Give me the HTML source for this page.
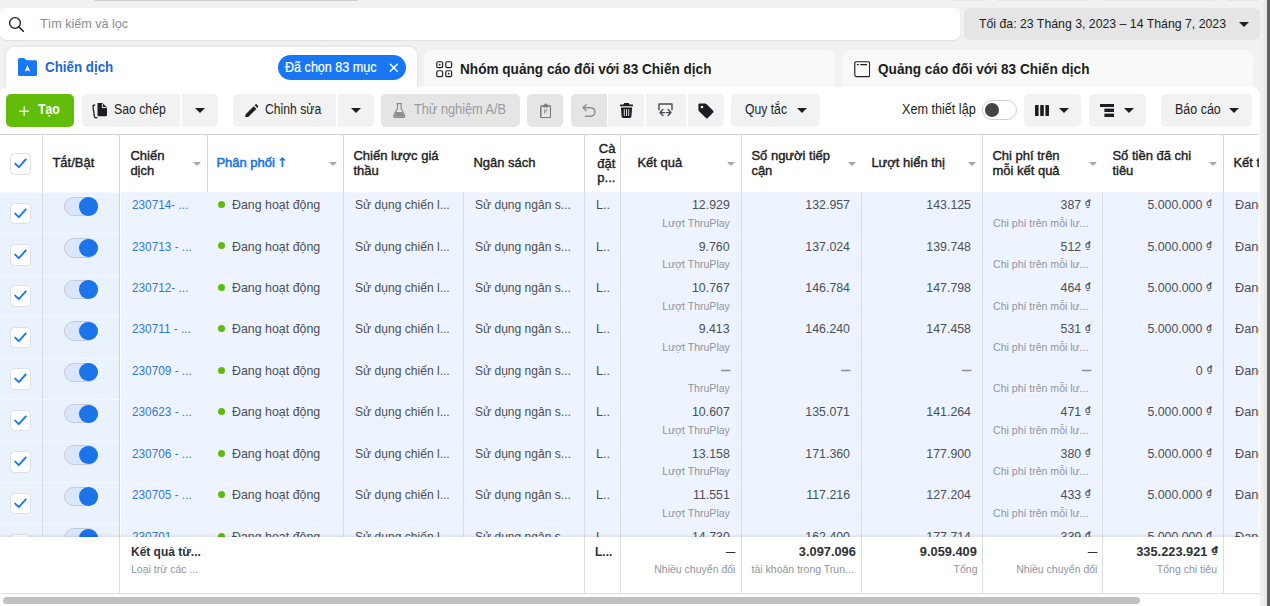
<!DOCTYPE html>
<html lang="vi">
<head>
<meta charset="utf-8">
<title>Trình quản lý quảng cáo</title>
<style>
*{box-sizing:border-box;margin:0;padding:0}
html,body{width:1270px;height:606px;overflow:hidden}
body{background:#f1f1f1;font-family:"Liberation Sans",sans-serif;font-size:12.6px;color:#1c1e21;position:relative}
.abs{position:absolute}
.t{position:absolute;white-space:nowrap;line-height:16px}
/* top strip */
.topbit{position:absolute;top:0;height:1px;background:#e6e6e6}
#search{left:0;top:8px;width:959.5px;height:32px;background:#fff;border-radius:6px;box-shadow:0 1px 1.5px rgba(0,0,0,.07)}
#date{left:964px;top:8px;width:296px;height:32px;background:#e5e5e5;border-radius:6px}
.caret{position:absolute;width:0;height:0;border-left:5px solid transparent;border-right:5px solid transparent;border-top:5px solid #1c1e21}
/* tabs */
.tab{position:absolute;background:#f9f9f9;border-radius:8px 8px 0 0}
#tab1{left:6px;top:47px;width:411px;height:42px;background:#fff;box-shadow:0 0 3px rgba(0,0,0,.12)}
#tab2{left:424px;top:50px;width:411px;height:37px}
#tab3{left:842px;top:50px;width:411px;height:37px}
.tabt{font-weight:bold;font-size:14.5px;color:#1c1e21;transform:scaleX(.938);transform-origin:0 50%}
#pill{left:278px;top:55px;width:128px;height:25px;border-radius:13px;background:#1877f2}
/* toolbar */
#panel{left:0;top:87px;width:1260px;height:519px;background:#fff;border-radius:7px 8px 0 0}
.btn{position:absolute;top:94px;height:33px;background:#f2f2f2;border-radius:5px}
.btn.dis{background:#e5e5e5}
.btn.l{border-radius:5px 0 0 5px}
.btn.m{border-radius:0}
.btn.r{border-radius:0 5px 5px 0}
#create{left:6px;width:68px;background:#62bd0a;border-radius:5px}
.bt{font-size:14px;transform:scaleX(.885);transform-origin:0 50%}
/* table */
#thead{left:0;top:134px;width:1259px;height:58px;background:#fff;border-top:1px solid #d2d2d2}
.vl{position:absolute;width:1px;background:#d8d8d8}
.th{position:absolute;font-weight:normal;font-size:13px;line-height:14.5px;color:#222;-webkit-text-stroke:.4px #222;white-space:nowrap}
.sort{position:absolute;width:0;height:0;border-left:4px solid transparent;border-right:4px solid transparent;border-top:4px solid #a6a6a6;margin-left:-.5px}
#rows{left:0;top:192px;width:1259px;height:346px;overflow:hidden}
.row{position:absolute;left:0;width:1260px;height:41.5px;background:#edf4ff}
.row .stick{position:absolute;left:0;top:0;width:120px;height:100%;background:#eaf2fe}
.row .sep{position:absolute;left:0;top:0;width:100%;height:1px;background:#f3f8ff}
.c{position:absolute;white-space:nowrap;line-height:16px;top:5.1px;color:#4b4f56;font-size:12.7px}
.c.n{font-size:13px;transform:scaleX(.95);transform-origin:100% 50%}
.c.n.dash{color:#8d9096;transform:scaleX(.68);-webkit-text-stroke:.45px #8d9096;top:4.5px}
.d{font-family:"DejaVu Sans",sans-serif;font-size:9.2px;position:relative;top:-2.9px;margin-left:.5px;-webkit-text-stroke:.25px}
.c.r{text-align:right}
.c.sx{transform-origin:0 50%}
.c.sub{top:23.7px;font-size:11.2px;color:#90949c;line-height:14px;transform:scaleX(.94);transform-origin:100% 50%}
.c.link{color:#3277df}
.cb{position:absolute;left:10px;width:20.5px;height:21.5px;background:#fff;border:1px solid #dcdfe5;border-radius:4.5px}
.cb svg{position:absolute;left:3px;top:4px}
.tg{position:absolute;left:64px;top:4.8px;width:34px;height:19.4px;border-radius:10px;background:#dae6fb;border:1px solid #c4cbd8}
.tg i{position:absolute;right:-.6px;top:-.5px;width:18.4px;height:18.4px;border-radius:50%;background:#1b74e8}
.dot{position:absolute;left:218px;top:9px;width:7px;height:7px;border-radius:50%;background:#5fba0f}
#foot{left:0;top:537px;width:1260px;height:57px;background:#fff;border-bottom:1px solid #e2e2e2;box-shadow:0 -1px 3px rgba(0,0,0,.10)}
.f{position:absolute;white-space:nowrap;line-height:16px;font-size:12.6px}
.f.b{font-weight:bold;color:#2e3136;top:7px;font-size:13px;transform:scaleX(.985);transform-origin:100% 50%}
.f.b.l{transform:scaleX(.92);transform-origin:0 50%}
.f.dash{font-weight:normal;-webkit-text-stroke:.3px #2e3136;transform:scaleX(.7)}
.f.s{font-size:11.2px;color:#90949c;top:24.8px;line-height:14px;transform:scaleX(.94);transform-origin:100% 50%}
.f.s.l{transform-origin:0 50%}
.f.r{text-align:right}
#sb{left:3px;top:597px;width:1137px;height:7px;border-radius:4px;background:#c1c1c1}
#rstrip{left:1267px;top:0;width:3px;height:606px;background:#616161}
#rstrip2{left:1260px;top:0;width:7px;height:606px;background:linear-gradient(90deg,#f1f1f1,#f0f0f0 40%,#e2e2e2)}
</style>
</head>
<body>
<div class="topbit" style="left:95px;width:263px;background:#c9cbcf"></div>
<div class="topbit" style="left:953px;width:31px"></div>
<div class="topbit" style="left:997px;width:91px"></div>
<div class="topbit" style="left:1102px;width:112px"></div>
<div class="topbit" style="left:1227px;width:32px"></div>

<div id="search" class="abs">
  <svg class="abs" style="left:8px;top:8px" width="17" height="17" viewBox="0 0 17 17"><circle cx="7" cy="7" r="5.4" fill="none" stroke="#1c1e21" stroke-width="1.3"/><path d="M11 11 L15.3 15.3" stroke="#1c1e21" stroke-width="1.5" stroke-linecap="round"/></svg>
  <span class="t" style="left:40px;top:8px;color:#8a8d91;font-size:12.9px;transform:scaleX(.975);transform-origin:0 50%">Tìm kiếm và lọc</span>
</div>
<div id="date" class="abs">
  <span class="t" style="left:15px;top:8px;font-size:12.7px;transform:scaleX(.969);transform-origin:0 50%;color:#1c1e21">Tối đa: 23 Tháng 3, 2023 – 14 Tháng 7, 2023</span>
  <span class="caret" style="left:275px;top:14px"></span>
</div>

<div id="tab1" class="tab"></div>
<div id="tab2" class="tab"></div>
<div id="tab3" class="tab"></div>
<div id="panel" class="abs"></div>

<!-- tab 1 content -->
<svg class="abs" style="left:18px;top:58px" width="19" height="18" viewBox="0 0 19 18"><path d="M1.5 0 H6.2 L8.4 2.2 H17.5 Q19 2.2 19 3.7 V16.5 Q19 18 17.5 18 H1.5 Q0 18 0 16.5 V1.5 Q0 0 1.5 0 Z" fill="#1877f2"/><path d="M9.5 7 L12.2 13.6 L9.5 12.2 L6.8 13.6 Z" fill="#fff"/></svg>
<span class="t tabt" style="left:45px;top:58.8px;color:#1967d8;transform:scaleX(.921)">Chiến dịch</span>
<div id="pill" class="abs">
  <span class="t" style="left:7.4px;top:3.6px;color:#fff;font-size:14.2px;transform:scaleX(.887);transform-origin:0 50%;-webkit-text-stroke:.2px #fff">Đã chọn 83 mục</span>
  <svg class="abs" style="left:110.8px;top:7.8px" width="9.5" height="9.5" viewBox="0 0 11 11"><path d="M1.5 1.5 L9.5 9.5 M9.5 1.5 L1.5 9.5" stroke="#fff" stroke-width="1.6" stroke-linecap="round"/></svg>
</div>
<!-- tab 2 content -->
<svg class="abs" style="left:436px;top:61px" width="16.6" height="16.6" viewBox="0 0 17 17" fill="none" stroke="#1c1e21" stroke-width="1.2"><rect x=".8" y=".8" width="6" height="6" rx="1.4"/><rect x="10" y=".8" width="6" height="6" rx="1.4"/><rect x=".8" y="10" width="6" height="6" rx="1.4"/><rect x="10" y="10" width="6" height="6" rx="1.4"/><circle cx="3.8" cy="3.8" r=".9" fill="#1c1e21" stroke="none"/><circle cx="13" cy="13" r=".9" fill="#1c1e21" stroke="none"/></svg>
<span class="t tabt" style="left:460px;top:61px">Nhóm quảng cáo đối với 83 Chiến dịch</span>
<!-- tab 3 content -->
<svg class="abs" style="left:853.6px;top:61.3px" width="16.4" height="16.4" viewBox="0 0 17 17" fill="none" stroke="#1c1e21" stroke-width="1.2"><rect x=".8" y=".8" width="15.4" height="15.4" rx="1.6"/><path d="M3 3.8 H5 M6.5 3.8 H13.5" stroke-width="1.4"/></svg>
<span class="t tabt" style="left:878px;top:61px">Quảng cáo đối với 83 Chiến dịch</span>

<!-- toolbar -->
<div id="create" class="btn">
  <svg class="abs" style="left:13px;top:11.5px" width="10.4" height="10.4" viewBox="0 0 12 12"><path d="M6 .8 V11.2 M.8 6 H11.2" stroke="#f2fae8" stroke-width="1.5" stroke-linecap="round"/></svg>
  <span class="t bt" style="left:31.8px;top:7.4px;color:#fff;font-weight:bold;transform:scaleX(.876)">Tạo</span>
</div>
<div class="btn l" style="left:82px;width:98px">
  <svg class="abs" style="left:10px;top:9px" width="16" height="16" viewBox="0 0 16 16"><path d="M5.5 0 H10.5 L15 4.5 V12 Q15 13.2 13.8 13.2 H6.7 Q5.5 13.2 5.5 12 Z" fill="#1c1e21"/><path d="M10.4 .6 V4.6 H14.4" fill="none" stroke="#f0f2f5" stroke-width="1"/><path d="M2.6 2 Q.8 2.2 1 3.8 L2.4 13.4 Q2.6 15 4.2 14.8 L5 14.7" fill="none" stroke="#1c1e21" stroke-width="1.3" stroke-linecap="round"/></svg>
  <span class="t bt" style="left:32px;top:7.4px;transform:scaleX(.875)">Sao chép</span>
</div>
<div class="btn r" style="left:182px;width:36px"><span class="caret" style="left:13px;top:14px"></span></div>
<div class="btn l" style="left:233px;width:103px">
  <svg class="abs" style="left:11.8px;top:9.6px" width="13.6" height="13.6" viewBox="0 0 15 15"><path d="M0 15 L.8 11.2 L9.6 2.4 L12.6 5.4 L3.8 14.2 Z M10.6 1.4 L11.6 .4 Q12.2 -.1 12.8 .4 L14.6 2.2 Q15.1 2.8 14.6 3.4 L13.6 4.4 Z" fill="#1c1e21"/></svg>
  <span class="t bt" style="left:32px;top:7.4px;transform:scaleX(.87)">Chỉnh sửa</span>
</div>
<div class="btn r" style="left:338px;width:36px"><span class="caret" style="left:13px;top:14px"></span></div>
<div class="btn dis" style="left:381px;width:139px">
  <svg class="abs" style="left:12px;top:9px" width="12.5" height="15" viewBox="0 0 14 15" preserveAspectRatio="none"><path d="M4 .6 H10 M5 .6 V5.2 L1 12.4 Q.2 14.2 2 14.4 H12 Q13.8 14.2 13 12.4 L9 5.2 V.6" fill="none" stroke="#8c8c8c" stroke-width="1.3" stroke-linejoin="round"/><path d="M3.6 9 H10.4 L12.4 12.8 Q12.8 13.8 11.8 13.8 H2.2 Q1.2 13.8 1.6 12.8 Z" fill="#8c8c8c"/></svg>
  <span class="t bt" style="left:33px;top:7.4px;color:#979ba1;transform:scaleX(.909)">Thử nghiệm A/B</span>
</div>
<div class="btn dis" style="left:527px;width:36px">
  <svg class="abs" style="left:12.6px;top:8.6px" width="11.5" height="15.5" viewBox="0 0 11.5 15.5" fill="none" stroke="#7c7c7c" stroke-width="1.5" stroke-linejoin="round"><path d="M3.2 3 H1.6 Q.8 3 .8 3.8 V13.9 Q.8 14.7 1.6 14.7 H9.9 Q10.7 14.7 10.7 13.9 V3.8 Q10.7 3 9.9 3 H8.3"/><path d="M3.4 3.9 V2.6 L5.75 .8 L8.1 2.6 V3.9 Z" fill="#7c7c7c" stroke-width="1"/><path d="M4 7 H7.6 M4.6 7 V10.6 M4.6 8.8 H6.6" stroke-width="1" stroke="#9a9a9a"/></svg>
</div>
<div class="btn dis l" style="left:571px;width:36px">
  <svg class="abs" style="left:11px;top:10px" width="14" height="13" viewBox="0 0 14 13" fill="none" stroke="#8c8c8c" stroke-width="1.4" stroke-linecap="round" stroke-linejoin="round"><path d="M4.2 .8 L1 3.8 L4.2 6.8 M1.4 3.8 H8.6 Q12.8 4 12.8 8 Q12.8 12 8.6 12.2 H3.4"/></svg>
</div>
<div class="btn m" style="left:608px;width:36px">
  <svg class="abs" style="left:12px;top:9px" width="13" height="15" viewBox="0 0 13 15"><path d="M4.2 0 H8.8 L9.6 1.4 H12.4 Q13 1.4 13 2 V3.2 H0 V2 Q0 1.4 .6 1.4 H3.4 Z" fill="#1c1e21"/><path d="M.9 4.4 H12.1 L11.4 13.6 Q11.3 15 9.9 15 H3.1 Q1.7 15 1.6 13.6 Z" fill="#1c1e21"/><path d="M4.3 6.2 V13 M6.5 6.2 V13 M8.7 6.2 V13" stroke="#f0f2f5" stroke-width=".9"/></svg>
</div>
<div class="btn m" style="left:646px;width:40px">
  <svg class="abs" style="left:12.2px;top:8.5px" width="15" height="14" viewBox="0 0 15 14" fill="none" stroke="#4a4d52" stroke-width="1.4" stroke-linejoin="round"><path d="M1 7.2 V1 H14 V7.2"/><path d="M4.9 6.6 L2 9.6 L4.9 12.6 M2.2 9.6 H6.6 M10.1 6.6 L13 9.6 L10.1 12.6 M8.4 9.6 H12.8" stroke-linecap="round"/></svg>
</div>
<div class="btn r" style="left:688px;width:36px">
  <svg class="abs" style="left:10px;top:9px" width="16" height="16" viewBox="0 0 16 16"><path d="M.4 1.6 Q.4 .4 1.6 .4 H7 Q7.8 .4 8.4 1 L15.2 7.8 Q16 8.6 15.2 9.6 L9.8 15 Q8.8 15.8 8 15 L1 8.2 Q.4 7.6 .4 6.8 Z" fill="#1c1e21"/><circle cx="4" cy="4" r="1.3" fill="#f0f2f5"/></svg>
</div>
<div class="btn" style="left:731px;width:89px">
  <span class="t bt" style="left:14.4px;top:7.4px;transform:scaleX(.87)">Quy tắc</span>
  <span class="caret" style="left:66px;top:14px"></span>
</div>
<span class="t bt" style="left:901.5px;top:101.4px;transform:scaleX(.902)">Xem thiết lập</span>
<div class="abs" style="left:982px;top:100px;width:35px;height:20px;border-radius:10px;background:#fff;border:1px solid #ccd0d5"><i class="abs" style="left:2px;top:2px;width:14px;height:14px;border-radius:50%;background:#444"></i></div>
<div class="btn" style="left:1024px;width:57px">
  <svg class="abs" style="left:11px;top:11px" width="14" height="11" viewBox="0 0 14 11" fill="#1c1e21"><rect x="0" y="0" width="3.6" height="11" rx=".4"/><rect x="5.2" y="0" width="3.6" height="11" rx=".4"/><rect x="10.4" y="0" width="3.6" height="11" rx=".4"/></svg>
  <span class="caret" style="left:35px;top:14px"></span>
</div>
<div class="btn" style="left:1089px;width:57px">
  <svg class="abs" style="left:11px;top:10px" width="14" height="13" viewBox="0 0 14 13" fill="#1c1e21"><rect x="0" y="0" width="14" height="3"/><rect x="4.4" y="4.6" width="9.6" height="3.4"/><rect x="4.4" y="9.6" width="9.6" height="3.4"/></svg>
  <span class="caret" style="left:35px;top:14px"></span>
</div>
<div class="btn" style="left:1161px;width:91px">
  <span class="t bt" style="left:14px;top:7.4px;transform:scaleX(.891)">Báo cáo</span>
  <span class="caret" style="left:68px;top:14px"></span>
</div>

<!-- table header -->
<div id="thead" class="abs">
  <i class="vl" style="left:42px;top:0;height:57px"></i><i class="vl" style="left:119px;top:0;height:57px"></i><i class="vl" style="left:207px;top:0;height:57px"></i><i class="vl" style="left:343px;top:0;height:57px"></i><i class="vl" style="left:584px;top:0;height:57px"></i><i class="vl" style="left:620px;top:0;height:57px"></i><i class="vl" style="left:741px;top:0;height:57px"></i><i class="vl" style="left:982px;top:0;height:57px"></i><i class="vl" style="left:1223px;top:0;height:57px"></i>
  <div class="cb" style="top:18px"><svg width="13" height="11" viewBox="0 0 13 11"><path d="M1.2 5.6 L4.8 9.2 L11.8 1.4" fill="none" stroke="#1877f2" stroke-width="1.9" stroke-linecap="round" stroke-linejoin="round"/></svg></div>
  <span class="th" style="left:52.4px;top:21.1px">Tắt/Bật</span>
  <span class="th" style="left:130.4px;top:14.1px">Chiến<br>dịch</span><i class="sort" style="left:193px;top:27px"></i>
  <span class="th" style="left:216.4px;top:21.1px;color:#1b74e8;-webkit-text-stroke:.55px #1b74e8">Phân phối<span style="font-family:'DejaVu Sans',sans-serif;font-weight:bold;font-size:13px;margin-left:2px;-webkit-text-stroke:0">↑</span></span><i class="sort" style="left:329px;top:27px"></i>
  <span class="th" style="left:353.4px;top:14.1px">Chiến lược giá<br>thầu</span>
  <span class="th" style="left:473.4px;top:21.1px">Ngân sách</span>
  <span class="th" style="left:585.4px;top:7.1px;width:30px;text-align:right">Cà<br>đặt<br>p...</span>
  <span class="th" style="left:637.4px;top:21.1px">Kết quả</span><i class="sort" style="left:727px;top:27px"></i>
  <span class="th" style="left:751.4px;top:14.1px">Số người tiếp<br>cận</span><i class="sort" style="left:848px;top:27px"></i>
  <span class="th" style="left:871.4px;top:21.1px">Lượt hiển thị</span><i class="sort" style="left:968px;top:27px"></i>
  <span class="th" style="left:992.4px;top:14.1px">Chi phí trên<br>mỗi kết quả</span><i class="sort" style="left:1089px;top:27px"></i>
  <span class="th" style="left:1112.4px;top:14.1px">Số tiền đã chi<br>tiêu</span><i class="sort" style="left:1209px;top:27px"></i>
  <span class="th" style="left:1233.4px;top:21.1px;width:26px;overflow:hidden">Kết t</span>
</div>
<div id="rows" class="abs">
<div class="row" style="top:0.0px"><div class="stick"></div><div class="sep"></div><i class="vl" style="left:42px;top:0;height:100%;background:#d8dde6"></i><i class="vl" style="left:343px;top:0;height:100%;background:#d8dde6"></i><i class="vl" style="left:463px;top:0;height:100%;background:#d8dde6"></i><i class="vl" style="left:584px;top:0;height:100%;background:#d8dde6"></i><i class="vl" style="left:620px;top:0;height:100%;background:#d8dde6"></i><i class="vl" style="left:741px;top:0;height:100%;background:#d8dde6"></i><i class="vl" style="left:861px;top:0;height:100%;background:#d8dde6"></i><i class="vl" style="left:982px;top:0;height:100%;background:#d8dde6"></i><i class="vl" style="left:1102px;top:0;height:100%;background:#d8dde6"></i><i class="vl" style="left:1223px;top:0;height:100%;background:#d8dde6"></i><i class="vl" style="left:119px;top:0;height:100%;background:#cfd5de"></i><i class="vl" style="left:120px;top:0;height:100%;background:#fff"></i><div class="cb" style="top:10.6px"><svg width="13" height="11" viewBox="0 0 13 11"><path d="M1.2 5.6 L4.8 9.2 L11.8 1.4" fill="none" stroke="#1877f2" stroke-width="1.9" stroke-linecap="round" stroke-linejoin="round"/></svg></div><div class="tg"><i></i></div><span class="c link sx" style="left:131.5px;transform:scaleX(.93)">230714- ...</span><i class="dot"></i><span class="c sx" style="left:232px;transform:scaleX(.977)">Đang hoạt động</span><span class="c sx" style="left:354.5px;transform:scaleX(.952)">Sử dụng chiến l...</span><span class="c sx" style="left:475px;transform:scaleX(.95)">Sử dụng ngân s...</span><span class="c" style="left:596px">L..</span><span class="c r n" style="right:530.5px;">12.929</span><span class="c r sub" style="right:530.5px;">Lượt ThruPlay</span><span class="c r n" style="right:410px;">132.957</span><span class="c r n" style="right:289px;">143.125</span><span class="c r n" style="right:169px;">387 <span class="d">₫</span></span><span class="c r sub" style="right:171.5px;">Chi phí trên mỗi lư...</span><span class="c r n" style="right:48px;">5.000.000 <span class="d">₫</span></span><span class="c" style="left:1235px;width:24px;overflow:hidden">Đang</span></div>
<div class="row" style="top:41.45px"><div class="stick"></div><div class="sep"></div><i class="vl" style="left:42px;top:0;height:100%;background:#d8dde6"></i><i class="vl" style="left:343px;top:0;height:100%;background:#d8dde6"></i><i class="vl" style="left:463px;top:0;height:100%;background:#d8dde6"></i><i class="vl" style="left:584px;top:0;height:100%;background:#d8dde6"></i><i class="vl" style="left:620px;top:0;height:100%;background:#d8dde6"></i><i class="vl" style="left:741px;top:0;height:100%;background:#d8dde6"></i><i class="vl" style="left:861px;top:0;height:100%;background:#d8dde6"></i><i class="vl" style="left:982px;top:0;height:100%;background:#d8dde6"></i><i class="vl" style="left:1102px;top:0;height:100%;background:#d8dde6"></i><i class="vl" style="left:1223px;top:0;height:100%;background:#d8dde6"></i><i class="vl" style="left:119px;top:0;height:100%;background:#cfd5de"></i><i class="vl" style="left:120px;top:0;height:100%;background:#fff"></i><div class="cb" style="top:10.6px"><svg width="13" height="11" viewBox="0 0 13 11"><path d="M1.2 5.6 L4.8 9.2 L11.8 1.4" fill="none" stroke="#1877f2" stroke-width="1.9" stroke-linecap="round" stroke-linejoin="round"/></svg></div><div class="tg"><i></i></div><span class="c link sx" style="left:131.5px;transform:scaleX(.93)">230713 - ...</span><i class="dot"></i><span class="c sx" style="left:232px;transform:scaleX(.977)">Đang hoạt động</span><span class="c sx" style="left:354.5px;transform:scaleX(.952)">Sử dụng chiến l...</span><span class="c sx" style="left:475px;transform:scaleX(.95)">Sử dụng ngân s...</span><span class="c" style="left:596px">L..</span><span class="c r n" style="right:530.5px;">9.760</span><span class="c r sub" style="right:530.5px;">Lượt ThruPlay</span><span class="c r n" style="right:410px;">137.024</span><span class="c r n" style="right:289px;">139.748</span><span class="c r n" style="right:169px;">512 <span class="d">₫</span></span><span class="c r sub" style="right:171.5px;">Chi phí trên mỗi lư...</span><span class="c r n" style="right:48px;">5.000.000 <span class="d">₫</span></span><span class="c" style="left:1235px;width:24px;overflow:hidden">Đang</span></div>
<div class="row" style="top:82.9px"><div class="stick"></div><div class="sep"></div><i class="vl" style="left:42px;top:0;height:100%;background:#d8dde6"></i><i class="vl" style="left:343px;top:0;height:100%;background:#d8dde6"></i><i class="vl" style="left:463px;top:0;height:100%;background:#d8dde6"></i><i class="vl" style="left:584px;top:0;height:100%;background:#d8dde6"></i><i class="vl" style="left:620px;top:0;height:100%;background:#d8dde6"></i><i class="vl" style="left:741px;top:0;height:100%;background:#d8dde6"></i><i class="vl" style="left:861px;top:0;height:100%;background:#d8dde6"></i><i class="vl" style="left:982px;top:0;height:100%;background:#d8dde6"></i><i class="vl" style="left:1102px;top:0;height:100%;background:#d8dde6"></i><i class="vl" style="left:1223px;top:0;height:100%;background:#d8dde6"></i><i class="vl" style="left:119px;top:0;height:100%;background:#cfd5de"></i><i class="vl" style="left:120px;top:0;height:100%;background:#fff"></i><div class="cb" style="top:10.6px"><svg width="13" height="11" viewBox="0 0 13 11"><path d="M1.2 5.6 L4.8 9.2 L11.8 1.4" fill="none" stroke="#1877f2" stroke-width="1.9" stroke-linecap="round" stroke-linejoin="round"/></svg></div><div class="tg"><i></i></div><span class="c link sx" style="left:131.5px;transform:scaleX(.93)">230712- ...</span><i class="dot"></i><span class="c sx" style="left:232px;transform:scaleX(.977)">Đang hoạt động</span><span class="c sx" style="left:354.5px;transform:scaleX(.952)">Sử dụng chiến l...</span><span class="c sx" style="left:475px;transform:scaleX(.95)">Sử dụng ngân s...</span><span class="c" style="left:596px">L..</span><span class="c r n" style="right:530.5px;">10.767</span><span class="c r sub" style="right:530.5px;">Lượt ThruPlay</span><span class="c r n" style="right:410px;">146.784</span><span class="c r n" style="right:289px;">147.798</span><span class="c r n" style="right:169px;">464 <span class="d">₫</span></span><span class="c r sub" style="right:171.5px;">Chi phí trên mỗi lư...</span><span class="c r n" style="right:48px;">5.000.000 <span class="d">₫</span></span><span class="c" style="left:1235px;width:24px;overflow:hidden">Đang</span></div>
<div class="row" style="top:124.35px"><div class="stick"></div><div class="sep"></div><i class="vl" style="left:42px;top:0;height:100%;background:#d8dde6"></i><i class="vl" style="left:343px;top:0;height:100%;background:#d8dde6"></i><i class="vl" style="left:463px;top:0;height:100%;background:#d8dde6"></i><i class="vl" style="left:584px;top:0;height:100%;background:#d8dde6"></i><i class="vl" style="left:620px;top:0;height:100%;background:#d8dde6"></i><i class="vl" style="left:741px;top:0;height:100%;background:#d8dde6"></i><i class="vl" style="left:861px;top:0;height:100%;background:#d8dde6"></i><i class="vl" style="left:982px;top:0;height:100%;background:#d8dde6"></i><i class="vl" style="left:1102px;top:0;height:100%;background:#d8dde6"></i><i class="vl" style="left:1223px;top:0;height:100%;background:#d8dde6"></i><i class="vl" style="left:119px;top:0;height:100%;background:#cfd5de"></i><i class="vl" style="left:120px;top:0;height:100%;background:#fff"></i><div class="cb" style="top:10.6px"><svg width="13" height="11" viewBox="0 0 13 11"><path d="M1.2 5.6 L4.8 9.2 L11.8 1.4" fill="none" stroke="#1877f2" stroke-width="1.9" stroke-linecap="round" stroke-linejoin="round"/></svg></div><div class="tg"><i></i></div><span class="c link sx" style="left:131.5px;transform:scaleX(.93)">230711 - ...</span><i class="dot"></i><span class="c sx" style="left:232px;transform:scaleX(.977)">Đang hoạt động</span><span class="c sx" style="left:354.5px;transform:scaleX(.952)">Sử dụng chiến l...</span><span class="c sx" style="left:475px;transform:scaleX(.95)">Sử dụng ngân s...</span><span class="c" style="left:596px">L..</span><span class="c r n" style="right:530.5px;">9.413</span><span class="c r sub" style="right:530.5px;">Lượt ThruPlay</span><span class="c r n" style="right:410px;">146.240</span><span class="c r n" style="right:289px;">147.458</span><span class="c r n" style="right:169px;">531 <span class="d">₫</span></span><span class="c r sub" style="right:171.5px;">Chi phí trên mỗi lư...</span><span class="c r n" style="right:48px;">5.000.000 <span class="d">₫</span></span><span class="c" style="left:1235px;width:24px;overflow:hidden">Đang</span></div>
<div class="row" style="top:165.8px"><div class="stick"></div><div class="sep"></div><i class="vl" style="left:42px;top:0;height:100%;background:#d8dde6"></i><i class="vl" style="left:343px;top:0;height:100%;background:#d8dde6"></i><i class="vl" style="left:463px;top:0;height:100%;background:#d8dde6"></i><i class="vl" style="left:584px;top:0;height:100%;background:#d8dde6"></i><i class="vl" style="left:620px;top:0;height:100%;background:#d8dde6"></i><i class="vl" style="left:741px;top:0;height:100%;background:#d8dde6"></i><i class="vl" style="left:861px;top:0;height:100%;background:#d8dde6"></i><i class="vl" style="left:982px;top:0;height:100%;background:#d8dde6"></i><i class="vl" style="left:1102px;top:0;height:100%;background:#d8dde6"></i><i class="vl" style="left:1223px;top:0;height:100%;background:#d8dde6"></i><i class="vl" style="left:119px;top:0;height:100%;background:#cfd5de"></i><i class="vl" style="left:120px;top:0;height:100%;background:#fff"></i><div class="cb" style="top:10.6px"><svg width="13" height="11" viewBox="0 0 13 11"><path d="M1.2 5.6 L4.8 9.2 L11.8 1.4" fill="none" stroke="#1877f2" stroke-width="1.9" stroke-linecap="round" stroke-linejoin="round"/></svg></div><div class="tg"><i></i></div><span class="c link sx" style="left:131.5px;transform:scaleX(.93)">230709 - ...</span><i class="dot"></i><span class="c sx" style="left:232px;transform:scaleX(.977)">Đang hoạt động</span><span class="c sx" style="left:354.5px;transform:scaleX(.952)">Sử dụng chiến l...</span><span class="c sx" style="left:475px;transform:scaleX(.95)">Sử dụng ngân s...</span><span class="c" style="left:596px">L..</span><span class="c r n dash" style="right:530.5px;">—</span><span class="c r sub" style="right:530.5px;">ThruPlay</span><span class="c r n dash" style="right:410px;">—</span><span class="c r n dash" style="right:289px;">—</span><span class="c r n dash" style="right:169px;">—</span><span class="c r sub" style="right:171.5px;">Chi phí trên mỗi lư...</span><span class="c r n" style="right:48px;">0 <span class="d">₫</span></span><span class="c" style="left:1235px;width:24px;overflow:hidden">Đang</span></div>
<div class="row" style="top:207.25px"><div class="stick"></div><div class="sep"></div><i class="vl" style="left:42px;top:0;height:100%;background:#d8dde6"></i><i class="vl" style="left:343px;top:0;height:100%;background:#d8dde6"></i><i class="vl" style="left:463px;top:0;height:100%;background:#d8dde6"></i><i class="vl" style="left:584px;top:0;height:100%;background:#d8dde6"></i><i class="vl" style="left:620px;top:0;height:100%;background:#d8dde6"></i><i class="vl" style="left:741px;top:0;height:100%;background:#d8dde6"></i><i class="vl" style="left:861px;top:0;height:100%;background:#d8dde6"></i><i class="vl" style="left:982px;top:0;height:100%;background:#d8dde6"></i><i class="vl" style="left:1102px;top:0;height:100%;background:#d8dde6"></i><i class="vl" style="left:1223px;top:0;height:100%;background:#d8dde6"></i><i class="vl" style="left:119px;top:0;height:100%;background:#cfd5de"></i><i class="vl" style="left:120px;top:0;height:100%;background:#fff"></i><div class="cb" style="top:10.6px"><svg width="13" height="11" viewBox="0 0 13 11"><path d="M1.2 5.6 L4.8 9.2 L11.8 1.4" fill="none" stroke="#1877f2" stroke-width="1.9" stroke-linecap="round" stroke-linejoin="round"/></svg></div><div class="tg"><i></i></div><span class="c link sx" style="left:131.5px;transform:scaleX(.93)">230623 - ...</span><i class="dot"></i><span class="c sx" style="left:232px;transform:scaleX(.977)">Đang hoạt động</span><span class="c sx" style="left:354.5px;transform:scaleX(.952)">Sử dụng chiến l...</span><span class="c sx" style="left:475px;transform:scaleX(.95)">Sử dụng ngân s...</span><span class="c" style="left:596px">L..</span><span class="c r n" style="right:530.5px;">10.607</span><span class="c r sub" style="right:530.5px;">Lượt ThruPlay</span><span class="c r n" style="right:410px;">135.071</span><span class="c r n" style="right:289px;">141.264</span><span class="c r n" style="right:169px;">471 <span class="d">₫</span></span><span class="c r sub" style="right:171.5px;">Chi phí trên mỗi lư...</span><span class="c r n" style="right:48px;">5.000.000 <span class="d">₫</span></span><span class="c" style="left:1235px;width:24px;overflow:hidden">Đang</span></div>
<div class="row" style="top:248.7px"><div class="stick"></div><div class="sep"></div><i class="vl" style="left:42px;top:0;height:100%;background:#d8dde6"></i><i class="vl" style="left:343px;top:0;height:100%;background:#d8dde6"></i><i class="vl" style="left:463px;top:0;height:100%;background:#d8dde6"></i><i class="vl" style="left:584px;top:0;height:100%;background:#d8dde6"></i><i class="vl" style="left:620px;top:0;height:100%;background:#d8dde6"></i><i class="vl" style="left:741px;top:0;height:100%;background:#d8dde6"></i><i class="vl" style="left:861px;top:0;height:100%;background:#d8dde6"></i><i class="vl" style="left:982px;top:0;height:100%;background:#d8dde6"></i><i class="vl" style="left:1102px;top:0;height:100%;background:#d8dde6"></i><i class="vl" style="left:1223px;top:0;height:100%;background:#d8dde6"></i><i class="vl" style="left:119px;top:0;height:100%;background:#cfd5de"></i><i class="vl" style="left:120px;top:0;height:100%;background:#fff"></i><div class="cb" style="top:10.6px"><svg width="13" height="11" viewBox="0 0 13 11"><path d="M1.2 5.6 L4.8 9.2 L11.8 1.4" fill="none" stroke="#1877f2" stroke-width="1.9" stroke-linecap="round" stroke-linejoin="round"/></svg></div><div class="tg"><i></i></div><span class="c link sx" style="left:131.5px;transform:scaleX(.93)">230706 - ...</span><i class="dot"></i><span class="c sx" style="left:232px;transform:scaleX(.977)">Đang hoạt động</span><span class="c sx" style="left:354.5px;transform:scaleX(.952)">Sử dụng chiến l...</span><span class="c sx" style="left:475px;transform:scaleX(.95)">Sử dụng ngân s...</span><span class="c" style="left:596px">L..</span><span class="c r n" style="right:530.5px;">13.158</span><span class="c r sub" style="right:530.5px;">Lượt ThruPlay</span><span class="c r n" style="right:410px;">171.360</span><span class="c r n" style="right:289px;">177.900</span><span class="c r n" style="right:169px;">380 <span class="d">₫</span></span><span class="c r sub" style="right:171.5px;">Chi phí trên mỗi lư...</span><span class="c r n" style="right:48px;">5.000.000 <span class="d">₫</span></span><span class="c" style="left:1235px;width:24px;overflow:hidden">Đang</span></div>
<div class="row" style="top:290.15px"><div class="stick"></div><div class="sep"></div><i class="vl" style="left:42px;top:0;height:100%;background:#d8dde6"></i><i class="vl" style="left:343px;top:0;height:100%;background:#d8dde6"></i><i class="vl" style="left:463px;top:0;height:100%;background:#d8dde6"></i><i class="vl" style="left:584px;top:0;height:100%;background:#d8dde6"></i><i class="vl" style="left:620px;top:0;height:100%;background:#d8dde6"></i><i class="vl" style="left:741px;top:0;height:100%;background:#d8dde6"></i><i class="vl" style="left:861px;top:0;height:100%;background:#d8dde6"></i><i class="vl" style="left:982px;top:0;height:100%;background:#d8dde6"></i><i class="vl" style="left:1102px;top:0;height:100%;background:#d8dde6"></i><i class="vl" style="left:1223px;top:0;height:100%;background:#d8dde6"></i><i class="vl" style="left:119px;top:0;height:100%;background:#cfd5de"></i><i class="vl" style="left:120px;top:0;height:100%;background:#fff"></i><div class="cb" style="top:10.6px"><svg width="13" height="11" viewBox="0 0 13 11"><path d="M1.2 5.6 L4.8 9.2 L11.8 1.4" fill="none" stroke="#1877f2" stroke-width="1.9" stroke-linecap="round" stroke-linejoin="round"/></svg></div><div class="tg"><i></i></div><span class="c link sx" style="left:131.5px;transform:scaleX(.93)">230705 - ...</span><i class="dot"></i><span class="c sx" style="left:232px;transform:scaleX(.977)">Đang hoạt động</span><span class="c sx" style="left:354.5px;transform:scaleX(.952)">Sử dụng chiến l...</span><span class="c sx" style="left:475px;transform:scaleX(.95)">Sử dụng ngân s...</span><span class="c" style="left:596px">L..</span><span class="c r n" style="right:530.5px;">11.551</span><span class="c r sub" style="right:530.5px;">Lượt ThruPlay</span><span class="c r n" style="right:410px;">117.216</span><span class="c r n" style="right:289px;">127.204</span><span class="c r n" style="right:169px;">433 <span class="d">₫</span></span><span class="c r sub" style="right:171.5px;">Chi phí trên mỗi lư...</span><span class="c r n" style="right:48px;">5.000.000 <span class="d">₫</span></span><span class="c" style="left:1235px;width:24px;overflow:hidden">Đang</span></div>
<div class="row" style="top:331.6px"><div class="stick"></div><div class="sep"></div><i class="vl" style="left:42px;top:0;height:100%;background:#d8dde6"></i><i class="vl" style="left:343px;top:0;height:100%;background:#d8dde6"></i><i class="vl" style="left:463px;top:0;height:100%;background:#d8dde6"></i><i class="vl" style="left:584px;top:0;height:100%;background:#d8dde6"></i><i class="vl" style="left:620px;top:0;height:100%;background:#d8dde6"></i><i class="vl" style="left:741px;top:0;height:100%;background:#d8dde6"></i><i class="vl" style="left:861px;top:0;height:100%;background:#d8dde6"></i><i class="vl" style="left:982px;top:0;height:100%;background:#d8dde6"></i><i class="vl" style="left:1102px;top:0;height:100%;background:#d8dde6"></i><i class="vl" style="left:1223px;top:0;height:100%;background:#d8dde6"></i><i class="vl" style="left:119px;top:0;height:100%;background:#cfd5de"></i><i class="vl" style="left:120px;top:0;height:100%;background:#fff"></i><div class="cb" style="top:10.6px"><svg width="13" height="11" viewBox="0 0 13 11"><path d="M1.2 5.6 L4.8 9.2 L11.8 1.4" fill="none" stroke="#1877f2" stroke-width="1.9" stroke-linecap="round" stroke-linejoin="round"/></svg></div><div class="tg"><i></i></div><span class="c link sx" style="left:131.5px;transform:scaleX(.93)">230701 - ...</span><i class="dot"></i><span class="c sx" style="left:232px;transform:scaleX(.977)">Đang hoạt động</span><span class="c sx" style="left:354.5px;transform:scaleX(.952)">Sử dụng chiến l...</span><span class="c sx" style="left:475px;transform:scaleX(.95)">Sử dụng ngân s...</span><span class="c" style="left:596px">L..</span><span class="c r n" style="right:530.5px;">14.730</span><span class="c r sub" style="right:530.5px;">Lượt ThruPlay</span><span class="c r n" style="right:410px;">162.400</span><span class="c r n" style="right:289px;">177.714</span><span class="c r n" style="right:169px;">339 <span class="d">₫</span></span><span class="c r sub" style="right:171.5px;">Chi phí trên mỗi lư...</span><span class="c r n" style="right:48px;">5.000.000 <span class="d">₫</span></span><span class="c" style="left:1235px;width:24px;overflow:hidden">Đang</span></div>
</div>
<div id="foot" class="abs"><i class="vl" style="left:119px;top:0;height:100%;background:#dadde1"></i><i class="vl" style="left:584px;top:0;height:100%;background:#dadde1"></i><i class="vl" style="left:620px;top:0;height:100%;background:#dadde1"></i><i class="vl" style="left:741px;top:0;height:100%;background:#dadde1"></i><i class="vl" style="left:861px;top:0;height:100%;background:#dadde1"></i><i class="vl" style="left:982px;top:0;height:100%;background:#dadde1"></i><i class="vl" style="left:1102px;top:0;height:100%;background:#dadde1"></i><i class="vl" style="left:1223px;top:0;height:100%;background:#dadde1"></i><span class="f b l" style="left:131px">Kết quả từ...</span><span class="f s l" style="left:131px">Loại trừ các ...</span><span class="f b l" style="left:594.5px">L...</span><span class="f b dash r" style="right:525px">—</span><span class="f s r" style="right:525px">Nhiều chuyển đổi</span><span class="f b r" style="right:404.5px">3.097.096</span><span class="f s r" style="right:406px">tài khoản trong Trun...</span><span class="f b r" style="right:283px">9.059.409</span><span class="f s r" style="right:283px">Tổng</span><span class="f b dash r" style="right:163px">—</span><span class="f s r" style="right:163px">Nhiều chuyển đổi</span><span class="f b r" style="right:42.5px">335.223.921 <span class="d" style="font-weight:bold">₫</span></span><span class="f s r" style="right:42.5px">Tổng chi tiêu</span></div>
<div id="sb" class="abs"></div>
<div id="rstrip2" class="abs"></div>
<div id="rstrip" class="abs"></div>
</body>
</html>
